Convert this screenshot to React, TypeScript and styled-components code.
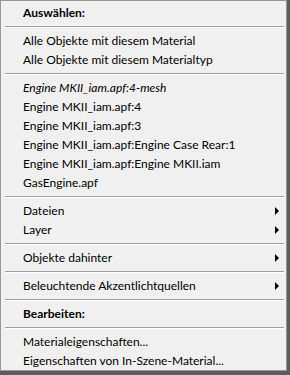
import React from 'react';
import styled, { createGlobalStyle } from 'styled-components';

const GlobalStyle = createGlobalStyle`
  html, body {
    margin: 0;
    padding: 0;
    background: #5d5d5d;
  }
  body {
    width: 290px;
    height: 375px;
    overflow: hidden;
  }
`;

// The popup menu body
const Menu = styled.div`
  box-sizing: border-box;
  width: 287px;
  height: 371px;
  background: #f0f0f0;
  border: 1px solid #979797;
  padding: 2px 1px 0;
  font-family: Lato, 'Noto Sans', sans-serif;
  font-size: 12px;
  color: #000;
  display: flex;
  flex-direction: column;
`;

const Item = styled.div<{ $bold?: boolean; $italic?: boolean }>`
  flex: none;
  height: 19px;
  display: flex;
  align-items: center;
  justify-content: space-between;
  padding: 0 6px 0 21px;
  font-weight: ${(p) => (p.$bold ? 700 : 400)};
  font-style: ${(p) => (p.$italic ? 'italic' : 'normal')};
  white-space: nowrap;
`;

const Separator = styled.div`
  flex: none;
  height: 9px;
  display: flex;
  align-items: center;
  padding: 0 1px 0 3px;

  &::after {
    content: '';
    flex: 1;
    height: 1px;
    background: #a0a0a0;
    border-bottom: 1px solid #ffffff;
  }
`;

const Arrow = styled.span`
  width: 0;
  height: 0;
  border-top: 4px solid transparent;
  border-bottom: 4px solid transparent;
  border-left: 4px solid #000;
`;

type Entry =
  | { kind: 'sep' }
  | { kind: 'item'; label: string; bold?: boolean; italic?: boolean; sub?: boolean };

const entries: Entry[] = [
  { kind: 'item', label: 'Auswählen:', bold: true },
  { kind: 'sep' },
  { kind: 'item', label: 'Alle Objekte mit diesem Material' },
  { kind: 'item', label: 'Alle Objekte mit diesem Materialtyp' },
  { kind: 'sep' },
  { kind: 'item', label: 'Engine MKII_iam.apf:4-mesh', italic: true },
  { kind: 'item', label: 'Engine MKII_iam.apf:4' },
  { kind: 'item', label: 'Engine MKII_iam.apf:3' },
  { kind: 'item', label: 'Engine MKII_iam.apf:Engine Case Rear:1' },
  { kind: 'item', label: 'Engine MKII_iam.apf:Engine MKII.iam' },
  { kind: 'item', label: 'GasEngine.apf' },
  { kind: 'sep' },
  { kind: 'item', label: 'Dateien', sub: true },
  { kind: 'item', label: 'Layer', sub: true },
  { kind: 'sep' },
  { kind: 'item', label: 'Objekte dahinter', sub: true },
  { kind: 'sep' },
  { kind: 'item', label: 'Beleuchtende Akzentlichtquellen', sub: true },
  { kind: 'sep' },
  { kind: 'item', label: 'Bearbeiten:', bold: true },
  { kind: 'sep' },
  { kind: 'item', label: 'Materialeigenschaften...' },
  { kind: 'item', label: 'Eigenschaften von In-Szene-Material...' },
];

const App: React.FC = () => {
  return (
    <>
      <GlobalStyle />
      <Menu>
        {entries.map((e, i) =>
          e.kind === 'sep' ? (
            <Separator key={i} />
          ) : (
            <Item key={i} $bold={e.bold} $italic={e.italic}>
              <span>{e.label}</span>
              {e.sub && <Arrow />}
            </Item>
          )
        )}
      </Menu>
    </>
  );
};

export default App;
